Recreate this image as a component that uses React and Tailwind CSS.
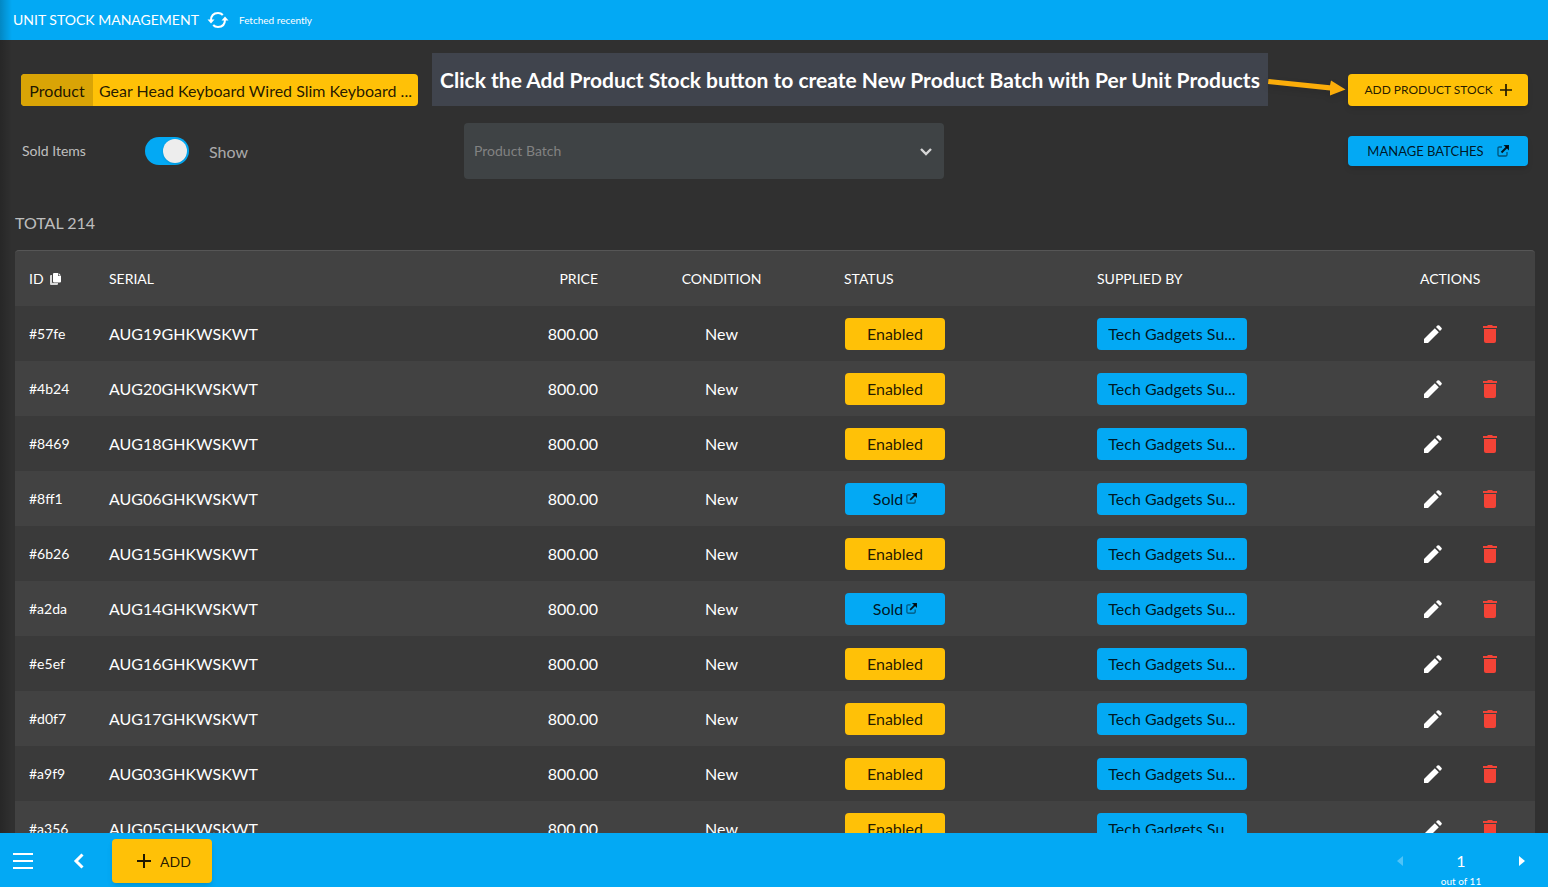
import { useState } from 'react'
import clsx from 'clsx'

const units = [
  { id: '#57fe', serial: 'AUG19GHKWSKWT', sold: false },
  { id: '#4b24', serial: 'AUG20GHKWSKWT', sold: false },
  { id: '#8469', serial: 'AUG18GHKWSKWT', sold: false },
  { id: '#8ff1', serial: 'AUG06GHKWSKWT', sold: true },
  { id: '#6b26', serial: 'AUG15GHKWSKWT', sold: false },
  { id: '#a2da', serial: 'AUG14GHKWSKWT', sold: true },
  { id: '#e5ef', serial: 'AUG16GHKWSKWT', sold: false },
  { id: '#d0f7', serial: 'AUG17GHKWSKWT', sold: false },
  { id: '#a9f9', serial: 'AUG03GHKWSKWT', sold: false },
  { id: '#a356', serial: 'AUG05GHKWSKWT', sold: false }
]

function App() {
  const [showSold, setShowSold] = useState(true)

  return (
    <div className="relative flex h-screen flex-col overflow-hidden bg-[#303030] font-['Lato',sans-serif] text-white">
      <header className="flex h-10 shrink-0 items-center bg-[#03a9f4] pl-[13px]">
        <h1 className="text-sm">UNIT STOCK MANAGEMENT</h1>
        <button type="button" aria-label="Refresh" className="ml-2">
          <SyncIcon />
        </button>
        <span className="ml-[10px] text-[10px]">Fetched recently</span>
      </header>

      <main className="min-h-0 flex-1 overflow-y-auto [scrollbar-width:none]">
        <section className="relative flex items-center justify-between pt-[34px] pr-5 pl-[21px]">
          <button type="button" className="flex h-8 items-center overflow-hidden rounded bg-[#ffc107] text-black/87">
            <span className="flex h-full w-[72px] items-center justify-center bg-[#d9a406] pt-0.5">Product</span>
            <span className="px-[6px] pt-0.5">Gear Head Keyboard Wired Slim Keyboard ...</span>
          </button>

          <Callout />

          <button
            type="button"
            className="flex h-8 w-[180px] items-center justify-center gap-[7px] rounded bg-[#ffc107] text-xs text-black/87 shadow-md"
          >
            ADD PRODUCT STOCK
            <PlusIcon size={12} />
          </button>
        </section>

        <section className="mt-[17px] flex items-center pr-5 pl-[22px]">
          <div className="flex w-[442px] shrink-0 items-center">
            <label htmlFor="sold" className="w-[123px] text-sm text-white/70">
              Sold Items
            </label>
            <input
              id="sold"
              type="checkbox"
              checked={showSold}
              onChange={(e) => setShowSold(e.target.checked)}
              className="h-7 w-11 appearance-none rounded-full bg-[#757575] p-[2px] before:block before:size-6 before:rounded-full before:bg-[#ededed] before:shadow checked:bg-[#03a9f4] checked:before:ml-4"
            />
            <span className="ml-5 pt-0.5 text-white/60">{showSold ? 'Show' : 'Hide'}</span>
          </div>

          <div className="relative w-[480px]">
            <select
              aria-label="Product Batch"
              className="h-14 w-full appearance-none rounded bg-[#3f4345] px-[10px] text-sm text-[#828282]"
            >
              <option>Product Batch</option>
            </select>
            <svg
              width="14"
              height="10"
              viewBox="0 0 14 10"
              className="pointer-events-none absolute top-6 right-[11px]"
            >
              <path d="M2 2l5 5 5-5" fill="none" stroke="#d6d6d6" strokeWidth="2.4" />
            </svg>
          </div>

          <button
            type="button"
            className="ml-auto flex h-[30px] w-[180px] items-center justify-center gap-[13px] rounded bg-[#03a9f4] text-[13px] text-black/87 shadow-md"
          >
            <span className="pt-px">MANAGE BATCHES</span>
            <OpenIcon size={12} />
          </button>
        </section>

        <section className="mt-8 pr-[13px] pl-[15px]">
          <p className="text-white/70">TOTAL 214</p>

          <table className="mt-[15px] w-full table-fixed border-separate border-spacing-0 overflow-hidden rounded-t border-t border-[#565656] bg-[#424242]">
            <colgroup>
              <col className="w-20" />
              <col />
              <col className="w-[120px]" />
              <col className="w-[219px]" />
              <col className="w-[252px]" />
              <col className="w-[323px]" />
              <col className="w-[129px]" />
            </colgroup>
            <thead>
              <tr className="h-[55px] text-left text-sm">
                <th className="px-[14px] font-normal">
                  <span className="flex items-center gap-[6px]">
                    ID <CopyIcon />
                  </span>
                </th>
                <th className="px-[14px] font-normal">SERIAL</th>
                <th className="px-[14px] text-right font-normal">PRICE</th>
                <th className="px-[14px] text-center font-normal">CONDITION</th>
                <th className="px-[13px] font-normal">STATUS</th>
                <th className="px-[14px] font-normal">SUPPLIED BY</th>
                <th className="px-[14px] font-normal">ACTIONS</th>
              </tr>
            </thead>
            <tbody>
              {units.map((unit) => (
                <Row key={unit.id} unit={unit} />
              ))}
            </tbody>
          </table>
        </section>
      </main>

      <footer className="z-10 flex h-[54px] shrink-0 items-center bg-[#03a9f4] px-3 pt-0.5">
        <button type="button" aria-label="Menu" className="px-px">
          <svg width="20" height="16" viewBox="0 0 20 16">
            <path d="M0 1h20M0 8h20M0 15h20" stroke="#fff" strokeWidth="2" />
          </svg>
        </button>
        <button type="button" aria-label="Back" className="ml-[39px]">
          <svg width="11" height="16" viewBox="0 0 11 16">
            <path d="M9.500 1.500L3 8l6.500 6.500" fill="none" stroke="#fff" strokeWidth="3" />
          </svg>
        </button>
        <button
          type="button"
          className="ml-7 flex h-11 w-[100px] items-center justify-center gap-[9px] rounded bg-[#ffc107] pl-1 text-sm text-black/87 shadow-md"
        >
          <PlusIcon size={14} />
          <span className="pt-0.5">ADD</span>
        </button>

        <nav aria-label="Pages" className="ml-auto flex items-center pr-[11px]">
          <button type="button" aria-label="Previous page" disabled className="opacity-30">
            <svg width="6" height="10" viewBox="0 0 6 10">
              <path d="M6 0v10L0 5z" fill="#fff" />
            </svg>
          </button>
          <div className="flex w-[116px] flex-col items-center pt-4">
            <span className="text-base leading-6">1</span>
            <span className="text-[10px] leading-4">out of 11</span>
          </div>
          <button type="button" aria-label="Next page">
            <svg width="6" height="10" viewBox="0 0 6 10">
              <path d="M0 0v10l6-5z" fill="#fff" />
            </svg>
          </button>
        </nav>
      </footer>

      {/* shadow of the closed side drawer */}
      <div className="pointer-events-none absolute inset-y-0 left-0 w-3 bg-linear-to-r from-black/20 to-transparent" />
    </div>
  )
}

function Row({ unit }) {
  return (
    <tr className="h-[55px] odd:bg-[#3a3a3a]">
      <td className="px-[14px] text-sm">{unit.id}</td>
      <td className="px-[14px]">{unit.serial}</td>
      <td className="px-[14px] text-right">800.00</td>
      <td className="px-[14px] text-center">New</td>
      <td className="px-[14px]">
        <button
          type="button"
          className={clsx(
            'flex h-8 w-[100px] items-center justify-center gap-[3px] rounded text-black/87',
            unit.sold ? 'bg-[#03a9f4]' : 'bg-[#ffc107]'
          )}
        >
          {unit.sold ? 'Sold' : 'Enabled'}
          {unit.sold && <OpenIcon size={11} />}
        </button>
      </td>
      <td className="px-[14px]">
        <button type="button" className="h-8 w-[150px] rounded bg-[#03a9f4] text-black/87">
          Tech Gadgets Su...
        </button>
      </td>
      <td className="pl-[9px]">
        <div className="flex gap-[21px]">
          <button type="button" aria-label={`Edit ${unit.serial}`} className="flex size-9 items-center justify-center">
            <PencilIcon />
          </button>
          <button type="button" aria-label={`Delete ${unit.serial}`} className="flex size-9 items-center justify-center">
            <TrashIcon />
          </button>
        </div>
      </td>
    </tr>
  )
}

function Callout() {
  return (
    <div className="absolute top-[13px] right-[200px] flex">
      <p className="flex h-[53px] w-[836px] items-center justify-center bg-[#40444d] text-[21px] font-bold whitespace-nowrap">
        Click the Add Product Stock button to create New Product Batch with Per Unit Products
      </p>
      <svg width="80" height="53" viewBox="0 0 80 53" className="drop-shadow-md">
        <path d="M0.500 26L62 32.200 63 27.500 77.500 36.500 62 42.500 62 37.500 0 31z" fill="#fbad0a" />
      </svg>
    </div>
  )
}

function SyncIcon() {
  return (
    <svg width="22" height="18" viewBox="0 0 22 18">
      <g fill="none" stroke="#fff" strokeWidth="2">
        <path d="M4 9.500C4 4.500 7 2 11 2c2 0 3.600.6 4.800 2" />
        <path d="M18 8.500c0 5-3 7.500-7 7.500-2 0-3.600-.6-4.800-2" />
      </g>
      <path d="M0.500 8.500h7L4 12.500zM14.500 9.500h7L18 5.500z" fill="#fff" />
    </svg>
  )
}

function PlusIcon({ size }) {
  return (
    <svg width={size} height={size} viewBox="0 0 14 14">
      <path d="M7 0v14M0 7h14" stroke="currentColor" strokeWidth="2" />
    </svg>
  )
}

function OpenIcon({ size }) {
  return (
    <svg width={size} height={size} viewBox="0 0 12 12" fill="none" stroke="currentColor">
      <path d="M5 2H2.200Q1 2 1 3.200v6.600Q1 11 2.200 11h6.600Q10 11 10 9.800V7" strokeWidth="1.300" opacity="0.6" />
      <path d="M4.500 7.500L10.500 1.500" strokeWidth="1.900" />
      <path d="M6.500 0H12v5.500z" fill="currentColor" stroke="none" />
    </svg>
  )
}

function CopyIcon() {
  return (
    <svg width="11" height="12" viewBox="0 0 11 12" fill="#fff">
      <path d="M0 3q0-1 1-1h1v7q0 1 1 1h5v1q0 1-1 1H1q-1 0-1-1z" opacity="0.8" />
      <path d="M3 1q0-1 1-1h4v3h3v5.500q0 1-1 1H4q-1 0-1-1z" />
      <path d="M8.600 0L11 2.400H8.600z" />
    </svg>
  )
}

function PencilIcon() {
  return (
    <svg width="18" height="18" viewBox="0 0 18 18" fill="#fff">
      <path d="M0 14L10.800 3.200l4 4L4 18H0z" />
      <path d="M12 2L13.400.6q.9-.9 1.900 0l2.100 2.100q.9 1 0 1.900L16 6z" />
    </svg>
  )
}

function TrashIcon() {
  return (
    <svg width="14" height="18" viewBox="0 0 14 18" fill="#f44336">
      <path d="M0 1h4l1-1h4l1 1h4v2H0z" />
      <path d="M1 4h12v12q0 2-2 2H3q-2 0-2-2z" />
    </svg>
  )
}

export default App
